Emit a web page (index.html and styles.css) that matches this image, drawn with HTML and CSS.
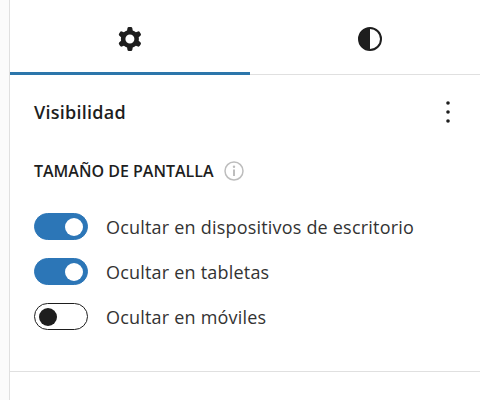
FILE: index.html
```html
<!DOCTYPE html>
<html lang="es">
<head>
<meta charset="utf-8">
<title>Visibilidad</title>
<link rel="stylesheet" href="styles.css">
</head>
<body>
<aside class="sidebar">
  <div class="tabs">
    <div class="tab tab-active">
      <svg class="tab-icon" viewBox="0 0 24 24" width="36" height="36"><path fill-rule="evenodd" d="M10.289 4.836A1 1 0 0111.275 4h1.306a1 1 0 01.987.836l.244 1.466c.787.26 1.503.679 2.108 1.218l1.393-.522a1 1 0 011.216.437l.653 1.13a1 1 0 01-.23 1.273l-1.148.944a6.025 6.025 0 010 2.435l1.149.946a1 1 0 01.23 1.272l-.653 1.13a1 1 0 01-1.216.437l-1.394-.522c-.605.54-1.32.958-2.108 1.218l-.244 1.466a1 1 0 01-.987.836h-1.306a1 1 0 01-.986-.836l-.244-1.466a5.995 5.995 0 01-2.108-1.218l-1.394.522a1 1 0 01-1.217-.436l-.653-1.131a1 1 0 01.23-1.272l1.149-.946a6.026 6.026 0 010-2.435l-1.148-.944a1 1 0 01-.23-1.272l.653-1.131a1 1 0 011.217-.437l1.393.522a5.994 5.994 0 012.108-1.218l.244-1.466zM14.929 12a3 3 0 11-6 0 3 3 0 016 0z"/></svg>
    </div>
    <div class="tab">
      <svg class="tab-icon" viewBox="0 0 36 36" width="36" height="36"><circle cx="18" cy="18" r="11" fill="none" stroke="#1e1e1e" stroke-width="2"/><path d="M18 7a11 11 0 0 0 0 22z"/></svg>
    </div>
  </div>
  <section class="panel">
    <div class="panel-head">
      <h2 class="panel-title">Visibilidad</h2>
      <svg class="more" viewBox="0 0 6 24" width="6" height="24"><circle cx="3" cy="3" r="1.800"/><circle cx="3" cy="12" r="1.800"/><circle cx="3" cy="21" r="1.800"/></svg>
    </div>
    <div class="group-head">
      <span class="group-title">TAMAÑO DE PANTALLA</span>
      <svg class="info" viewBox="0 0 20 20" width="20" height="20"><circle cx="10" cy="10" r="9" fill="none" stroke="#bdbdbd" stroke-width="1.500"/><circle cx="10" cy="5.800" r="1.200" fill="#bdbdbd"/><rect x="9" y="8.500" width="2" height="6.500" fill="#bdbdbd"/></svg>
    </div>
    <ul class="toggles">
      <li class="toggle-row"><span class="toggle toggle-on"><span class="knob"></span></span><span class="toggle-label">Ocultar en dispositivos de escritorio</span></li>
      <li class="toggle-row"><span class="toggle toggle-on"><span class="knob"></span></span><span class="toggle-label">Ocultar en tabletas</span></li>
      <li class="toggle-row"><span class="toggle"><span class="knob"></span></span><span class="toggle-label">Ocultar en móviles</span></li>
    </ul>
  </section>
</aside>
</body>
</html>
```

FILE: styles.css
```css
* { box-sizing: border-box; }
html, body { margin: 0; height: 100%; }
body {
  background: #fbfbfb;
  font-family: "Open Sans", "Noto Sans", sans-serif;
  color: #1e1e1e;
  overflow: hidden;
}
.sidebar {
  margin-left: 9px;
  height: 400px;
  background: #fff;
  border-left: 1px solid #e0e0e0;
}
.tabs {
  display: flex;
  height: 75px;
  border-bottom: 1px solid #e0e0e0;
}
.tab {
  flex: 0 0 240px;
  height: 75px;
  display: flex;
  justify-content: center;
  padding-top: 21px;
}
.tab-active { border-bottom: 3px solid #2c76ab; }
.tab-icon { display: block; fill: #1e1e1e; }
.panel {
  height: 297px;
  padding: 0 24px;
  border-bottom: 1px solid #e0e0e0;
}
.panel-head {
  display: flex;
  justify-content: space-between;
  align-items: center;
  height: 76px;
  padding: 0 5px 2px 0;
}
.panel-title {
  margin: 0;
  font-size: 18px;
  font-weight: 600;
  letter-spacing: 0.25px;
}
.more { fill: #1e1e1e; }
.group-head {
  display: flex;
  align-items: center;
  gap: 10px;
  height: 24px;
  margin-top: 8px;
}
.group-title {
  font-size: 16px;
  font-weight: 600;
}
.toggles {
  list-style: none;
  margin: 30px 0 0;
  padding: 0;
  display: flex;
  flex-direction: column;
  gap: 18px;
}
.toggle-row {
  display: flex;
  align-items: center;
  gap: 18px;
  height: 27px;
}
.toggle {
  flex: none;
  width: 54px;
  height: 27px;
  border: 1px solid #1e1e1e;
  border-radius: 14px;
  background: #fff;
  display: flex;
  align-items: center;
  padding: 0 4px;
}
.toggle-on {
  background: #2c76b7;
  border-color: #2c76b7;
  justify-content: flex-end;
}
.knob {
  width: 18px;
  height: 18px;
  border-radius: 50%;
  background: #1e1e1e;
}
.toggle-on .knob { background: #fff; }
.toggle-label {
  font-size: 18px;
  letter-spacing: 0.2px;
  color: #333;
  white-space: nowrap;
}
```
